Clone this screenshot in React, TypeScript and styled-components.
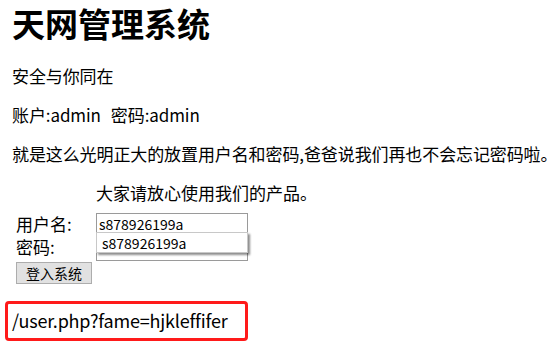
import React from 'react';
import styled, { createGlobalStyle } from 'styled-components';

const GlobalStyle = createGlobalStyle`
    html, body {
        margin: 0;
        padding: 0;
        background: #ffffff;
    }
    body {
        font-family: "Noto Sans CJK SC", "Noto Sans", sans-serif;
        color: #000000;
    }
`

const Page = styled.div`
    width: 557px;
    height: 358px;
    padding: 3px 0 0 12px;
    box-sizing: border-box;
    overflow: hidden;
`

const Title = styled.h1`
    margin: 0 0 22px 0;
    font-size: 33px;
    line-height: 40px;
    font-weight: 700;
`

const Paragraph = styled.p`
    margin: 17px 0;
    font-size: 17px;
    line-height: 22px;
    letter-spacing: -0.1px;
    white-space: nowrap;
`

const Credentials = styled.span`
    & + & {
        margin-left: 10px;
    }
`

const LoginForm = styled.form`
    display: grid;
    grid-template-columns: 80px 152px;
    grid-template-rows: 24px 22px 22px 22px;
    row-gap: 4px;
    margin: 0 0 0 4px;
    font-size: 17px;
`

const Notice = styled.div`
    grid-column: 2;
    line-height: 22px;
    white-space: nowrap;
`

const Label = styled.label<{ $shift: number }>`
    grid-column: 1;
    padding-top: ${p => p.$shift}px;
    line-height: 22px;
    white-space: nowrap;
`

const Field = styled.div`
    grid-column: 2;
    position: relative;
`

const TextInput = styled.input`
    box-sizing: border-box;
    width: 152px;
    height: 22px;
    margin: 0;
    padding: 0 2px;
    border: 1px solid #9a9a9a;
    font-family: "Noto Sans CJK SC", sans-serif;
    font-size: 14px;
    color: #000;
    outline: none;
`

const Suggestions = styled.ul`
    position: absolute;
    left: 0;
    top: 22px;
    z-index: 2;
    width: 152px;
    height: 21px;
    margin: 0;
    padding: 0;
    box-sizing: border-box;
    list-style: none;
    background: #ffffff;
    border: 1px solid #c8c8c8;
    box-shadow: 2px 2px 2px rgba(0, 0, 0, 0.45);
`

const Suggestion = styled.li`
    padding: 1px 0 0 5px;
    font-size: 14px;
    line-height: 18px;
`

const SubmitButton = styled.button`
    grid-column: 1;
    box-sizing: border-box;
    width: 76px;
    height: 22px;
    margin: 0;
    padding: 0;
    background: #e1e1e1;
    border: 1px solid #adadad;
    font-family: "Noto Sans CJK SC", sans-serif;
    font-size: 14px;
    line-height: 20px;
    color: #000;
`

const UrlBox = styled.div`
    box-sizing: border-box;
    width: 243px;
    height: 40px;
    margin: 17px 0 0 -7px;
    padding: 3px 0 0 4px;
    border: 3px solid #ff1a1a;
    border-radius: 4px;
    font-size: 18px;
    letter-spacing: -0.2px;
    line-height: 26px;
    white-space: nowrap;
`

export default function App() {
    return (
        <>
            <GlobalStyle />
            <Page>
                <Title>天网管理系统</Title>
                <Paragraph>安全与你同在</Paragraph>
                <Paragraph>
                    <Credentials>账户:admin</Credentials>
                    <Credentials>密码:admin</Credentials>
                </Paragraph>
                <Paragraph>就是这么光明正大的放置用户名和密码,爸爸说我们再也不会忘记密码啦。</Paragraph>
                <LoginForm onSubmit={e => e.preventDefault()}>
                    <Notice>大家请放心使用我们的产品。</Notice>
                    <Label $shift={3}>用户名:</Label>
                    <Field>
                        <TextInput type="text" defaultValue="s878926199a" />
                        <Suggestions>
                            <Suggestion>s878926199a</Suggestion>
                        </Suggestions>
                    </Field>
                    <Label $shift={0}>密码:</Label>
                    <Field>
                        <TextInput type="password" />
                    </Field>
                    <SubmitButton type="submit">登入系统</SubmitButton>
                </LoginForm>
                <UrlBox>/user.php?fame=hjkleffifer</UrlBox>
            </Page>
        </>
    );
}
